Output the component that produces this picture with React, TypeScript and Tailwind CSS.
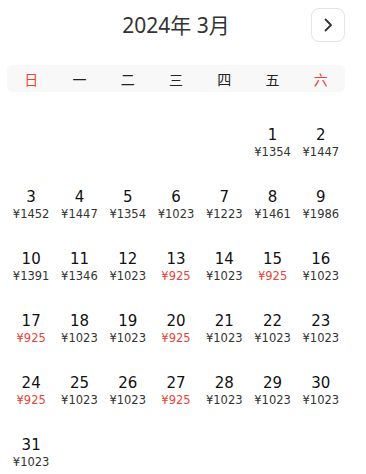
import React from "react";

const prices: Record<number, number> = {
  1: 1354, 2: 1447, 3: 1452, 4: 1447, 5: 1354, 6: 1023, 7: 1223, 8: 1461, 9: 1986,
  10: 1391, 11: 1346, 12: 1023, 13: 925, 14: 1023, 15: 925, 16: 1023,
  17: 925, 18: 1023, 19: 1023, 20: 925, 21: 1023, 22: 1023, 23: 1023,
  24: 925, 25: 1023, 26: 1023, 27: 925, 28: 1023, 29: 1023, 30: 1023, 31: 1023,
};

const weekdays = ["日", "一", "二", "三", "四", "五", "六"];

export default function App() {
  const cells: (number | null)[] = [];
  for (let i = 0; i < 5; i++) cells.push(null);
  for (let d = 1; d <= 31; d++) cells.push(d);
  return (
    <div
      className="w-[366px] h-[474px] bg-white overflow-hidden"
      style={{ fontFamily: '"DejaVu Sans", "Noto Sans CJK SC", sans-serif' }}
    >
      <div className="relative ml-[7px] w-[338px] h-[50px] flex items-center justify-center pt-[1px]">
        <div
          className="text-[21px] text-[#333] leading-none"
          style={{ fontFamily: '"Noto Sans", "Noto Sans CJK SC", sans-serif' }}
        >
          2024年 3月
        </div>
        <button className="absolute right-0 top-[8px] w-[34px] h-[34px] rounded-[8px] border border-[#e3e3e3] flex items-center justify-center">
          <svg width="14" height="14" viewBox="0 0 14 14" fill="none">
            <path d="M4.5 1.5 L10 7 L4.5 12.5" stroke="#333" strokeWidth="1.8" strokeLinecap="round" strokeLinejoin="round" />
          </svg>
        </button>
      </div>
      <div className="ml-[7px] w-[338px] mt-[15px] h-[27px] rounded-[6px] bg-[#f8f8f8] grid grid-cols-7 items-center">
        {weekdays.map((w, i) => (
          <div
            key={w}
            className={`text-center text-[14px] leading-none ${i === 0 || i === 6 ? "text-[#e8443a]" : "text-[#222]"}`}
            style={{ fontFamily: '"Noto Sans CJK SC", sans-serif' }}
          >
            {w}
          </div>
        ))}
      </div>
      <div className="ml-[7px] w-[338px] mt-[20px] grid grid-cols-7 auto-rows-[62px]">
        {cells.map((d, i) => (
          <div key={i} className="flex flex-col items-center justify-center">
            {d !== null && (
              <>
                <div className="text-[15px] leading-[18px] text-[#111]">{d}</div>
                <div
                  className={`text-[11.5px] leading-[16px] ${prices[d] === 925 ? "text-[#e8443a]" : "text-[#333]"}`}
                >
                  ¥{prices[d]}
                </div>
              </>
            )}
          </div>
        ))}
      </div>
    </div>
  );
}
